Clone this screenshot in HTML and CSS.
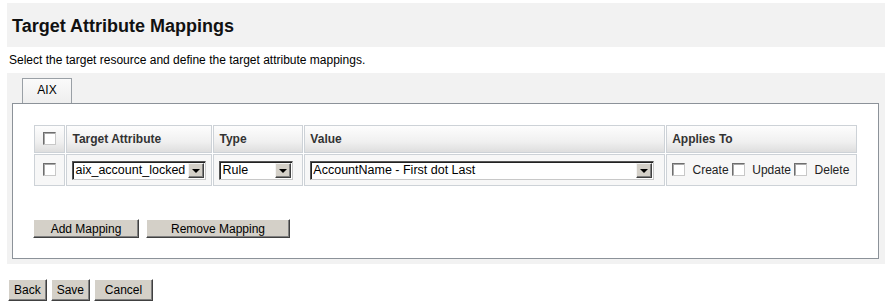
FILE: index.html
```html
<!DOCTYPE html>
<html lang="en">

<head>
    <meta charset="UTF-8">
    <meta name="viewport" content="width=device-width, initial-scale=1.0">
    <title>Target Attribute Mappings</title>
    <link rel="stylesheet" href="styles.css">
</head>

<body>

    <div class="titleBar">
        <h1>Target Attribute Mappings</h1>
    </div>
    <p class="intro">Select the target resource and define the target attribute mappings.</p>

    <div class="panel">
        <div class="tabs">
            <span class="tab">AIX</span>
        </div>
        <div class="tabBody">
            <table class="mappings">
                <thead>
                    <tr>
                        <th class="check colCheck"><input type="checkbox"></th>
                        <th class="colAttr">Target Attribute</th>
                        <th class="colType">Type</th>
                        <th class="colValue">Value</th>
                        <th class="colApplies">Applies To</th>
                    </tr>
                </thead>
                <tbody>
                    <tr>
                        <td class="check"><input type="checkbox"></td>
                        <td>
                            <label class="combo attr">
                                <select><option>aix_account_locked</option></select>
                                <span class="arrow"></span>
                            </label>
                        </td>
                        <td>
                            <label class="combo type">
                                <select><option>Rule</option></select>
                                <span class="arrow"></span>
                            </label>
                        </td>
                        <td>
                            <label class="combo value">
                                <select><option>AccountName - First dot Last</option></select>
                                <span class="arrow"></span>
                            </label>
                        </td>
                        <td class="applies">
                            <label><input type="checkbox"> Create</label>
                            <label><input type="checkbox"> Update</label>
                            <label><input type="checkbox"> Delete</label>
                        </td>
                    </tr>
                </tbody>
            </table>

            <div class="mapButtons">
                <button class="addBtn">Add Mapping</button>
                <button class="removeBtn">Remove Mapping</button>
            </div>
        </div>
    </div>

    <div class="actions">
        <button>Back</button>
        <button>Save</button>
        <button class="cancelBtn">Cancel</button>
    </div>

</body>

</html>
```

FILE: styles.css
```css
body {
    margin: 0px;
    padding: 3px 0px 0px 7px;
    font-family: 'Liberation Sans', Arial, sans-serif;
    font-size: 12px;
    color: #000;
    background: white;
}

.titleBar {
    background: #f2f2f2;
    height: 44px;
    padding-left: 5px;
}

.titleBar h1 {
    margin: 0px;
    font-size: 18px;
    font-weight: bold;
    line-height: 46px;
    color: #111;
}

.intro {
    margin: 0px;
    padding-left: 2px;
    line-height: 26px;
}

.panel {
    background: #f2f2f2;
    padding: 5px 6px 5px 5px;
}

.tabs {
    display: flex;
    padding-left: 10px;
}

.tab {
    display: inline-block;
    width: 48px;
    height: 24px;
    line-height: 23px;
    text-align: center;
    border: 1px solid #9aa0a6;
    border-bottom: none;
    background: linear-gradient(#fafafa, #eeeeee);
}

.tabBody {
    background: white;
    border: 1px solid #8c9299;
    padding: 20px;
}

table.mappings {
    table-layout: fixed;
    border-collapse: separate;
    border-spacing: 1px;
}

/* content widths: cells are 32 / 146 / 90 / 361 / 195 px wide */
.colCheck { width: 30px; }
.colAttr { width: 134px; }
.colType { width: 78px; }
.colValue { width: 349px; }
.colApplies { width: 183px; }

table.mappings th,
table.mappings td {
    border: 1px solid #cdd2d7;
    text-align: left;
    padding: 0px 5px;
}

table.mappings th {
    height: 26px;
    font-weight: bold;
    color: #333;
    background: linear-gradient(#fdfdfd, #f0f0f0 60%, #dedede);
}

table.mappings td {
    height: 30px;
    background: #f7f7f7;
}

table.mappings .check {
    text-align: center;
    padding: 0px;
}

input[type=checkbox] {
    appearance: none;
    -webkit-appearance: none;
    width: 13px;
    height: 13px;
    margin: 0px;
    vertical-align: -2px;
    background: white;
    border: 1px solid;
    border-color: #6e6e6e #c8c8c8 #c8c8c8 #6e6e6e;
    box-shadow: inset 1px 1px #a8a8a8;
}

.combo {
    position: relative;
    display: inline-block;
    vertical-align: middle;
}

.combo select {
    appearance: none;
    -webkit-appearance: none;
    display: block;
    height: 19px;
    margin: 0px;
    padding: 0px 2px;
    font-family: 'Liberation Sans', Arial, sans-serif;
    font-size: 12.5px;
    color: #000;
    background: white;
    border: 1px solid;
    border-color: #555 #c8c8c8 #c8c8c8 #555;
    box-shadow: inset 1px 1px #222;
    border-radius: 0px;
}

.combo.attr select {
    width: 134px;
}

.combo.type select {
    width: 74px;
}

.combo.value select {
    width: 344px;
}

.combo .arrow {
    position: absolute;
    top: 2px;
    right: 2px;
    width: 14px;
    height: 13px;
    background: #d4d0c8;
    border: 1px solid;
    border-color: #f4f4f4 #404040 #404040 #f4f4f4;
    box-shadow: inset -1px -1px #808080;
    pointer-events: none;
}

.combo .arrow::after {
    content: '';
    position: absolute;
    left: 3px;
    top: 5px;
    border-left: 4px solid transparent;
    border-right: 4px solid transparent;
    border-top: 4px solid black;
}

td.applies {
    padding-left: 11px;
    color: #222;
}

td.applies input {
    margin-right: 4px;
}

button {
    height: 19px;
    margin: 0px;
    padding: 0px 5px;
    font-family: 'Liberation Sans', Arial, sans-serif;
    font-size: 12px;
    color: #000;
    background: #d4d0c8;
    border: 1px solid;
    border-color: #ffffff #404040 #404040 #ffffff;
    box-shadow: inset -1px -1px #808080;
    cursor: pointer;
}

.mapButtons {
    display: flex;
    gap: 7px;
    margin-top: 32px;
}

.addBtn {
    width: 106px;
}

.removeBtn {
    width: 144px;
}

.actions {
    display: flex;
    gap: 4px;
    margin-top: 15px;
    padding-left: 1px;
}

.actions button {
    height: 22px;
}

.actions .cancelBtn {
    width: 59px;
}
```
